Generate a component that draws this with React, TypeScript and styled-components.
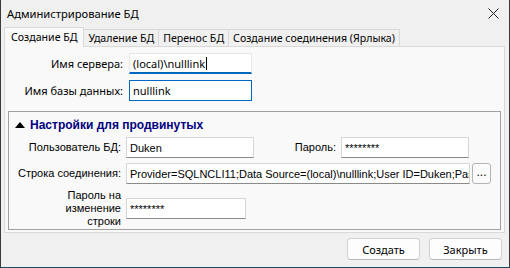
import styled, { createGlobalStyle } from 'styled-components';

const GlobalStyle = createGlobalStyle`
  html, body {
    margin: 0;
    padding: 0;
    background: #f0f0f0;
  }
  #root {
    width: 510px;
    height: 268px;
  }
`;

const uiFont = `'Noto Sans', 'Open Sans', sans-serif`;
const formFont = `'Liberation Sans', 'DejaVu Sans', sans-serif`;

const Window = styled.div`
  box-sizing: border-box;
  width: 510px;
  height: 268px;
  display: flex;
  flex-direction: column;
  background: #f0f0f0;
  border-left: 1px solid #3a3a3a;
  border-right: 1px solid #3a3a3a;
  border-bottom: 1px solid #1f4d5e;
  font-family: ${uiFont};
  font-size: 11px;
  color: #000;
`;

const TitleBar = styled.div`
  height: 27px;
  display: flex;
  align-items: center;
  justify-content: space-between;
  padding: 0 10px 0 6px;
  font-size: 11.2px;
`;

const CloseIcon = () => (
  <svg width="11" height="11" viewBox="0 0 11 11">
    <path d="M0.5 0.5 L10.5 10.5 M10.5 0.5 L0.5 10.5" stroke="#222" strokeWidth="1" />
  </svg>
);

const TabRow = styled.div`
  display: flex;
  align-items: flex-end;
  height: 20px;
  padding-left: 3px;
  position: relative;
  z-index: 1;
`;

const Tab = styled.div<{ $active?: boolean }>`
  box-sizing: border-box;
  height: ${(p) => (p.$active ? '20px' : '18px')};
  padding: 0 ${(p) => (p.$active ? '6px' : '4px')};
  display: flex;
  align-items: center;
  font-size: 10.6px;
  background: ${(p) => (p.$active ? '#f9f9f9' : '#f0f0f0')};
  border: 1px solid #d9d9d9;
  border-bottom: ${(p) => (p.$active ? '1px solid #f9f9f9' : '1px solid #d9d9d9')};
  margin-left: ${(p) => (p.$active ? '0' : '-1px')};
  white-space: nowrap;
`;

const Panel = styled.div`
  box-sizing: border-box;
  margin: -1px 4px 0 3px;
  height: 187px;
  background: #f9f9f9;
  border: 1px solid #d9d9d9;
  padding: 6px 3px 0 3px;
  display: flex;
  flex-direction: column;
`;

const TopRow = styled.div`
  display: flex;
  align-items: center;
  height: 21px;
  margin-bottom: 6px;
`;

const TopLabel = styled.div`
  width: 115px;
  padding-right: 6px;
  text-align: right;
`;

const TopInput = styled.div<{ $focused?: boolean }>`
  box-sizing: border-box;
  width: 123px;
  height: 21px;
  background: #fff;
  display: flex;
  align-items: center;
  padding-left: 3px;
  border: 1px solid ${(p) => (p.$focused ? '#e6e6e6' : '#0067c0')};
  border-bottom: ${(p) => (p.$focused ? '2px solid #0067c0' : '1px solid #0067c0')};
`;

const Caret = styled.span`
  display: inline-block;
  width: 1px;
  height: 13px;
  background: #000;
  margin-left: 1px;
`;

const GroupBox = styled.div`
  box-sizing: border-box;
  margin: 4px 0 0 0;
  height: 119px;
  border: 1px solid #a0a0a0;
  padding: 6px 0 0 6px;
  font-family: ${formFont};
  font-size: 11px;
`;

const GroupHeader = styled.div`
  display: flex;
  align-items: center;
  height: 14px;
  color: #000080;
  font-weight: bold;
  font-size: 12px;
  margin-bottom: 5px;
  gap: 5px;
`;

const Triangle = () => (
  <svg width="10" height="6" viewBox="0 0 10 6">
    <polygon points="0,6 10,6 5,0" fill="#000" />
  </svg>
);

const FormRow = styled.div`
  display: flex;
  align-items: center;
  margin-bottom: 5px;
`;

const FormLabel = styled.div<{ $width: number }>`
  width: ${(p) => p.$width}px;
  padding-right: 5px;
  text-align: right;
  line-height: 13px;
  white-space: nowrap;
`;

const FormInput = styled.div<{ $width: number }>`
  box-sizing: border-box;
  width: ${(p) => p.$width}px;
  height: 21px;
  background: #fff;
  border: 1px solid #d6d6d6;
  border-bottom: 1px solid #8a8a8a;
  display: flex;
  align-items: center;
  padding-left: 3px;
  overflow: hidden;
  white-space: nowrap;
`;

const EllipsisButton = styled.div`
  box-sizing: border-box;
  width: 19px;
  height: 21px;
  margin-left: 2px;
  border: 1px solid #b4b4b4;
  border-radius: 3px;
  background: #fbfbfb;
  display: flex;
  align-items: center;
  justify-content: center;
  padding-bottom: 3px;
  font-size: 12px;
`;

const Footer = styled.div`
  flex: 1;
  display: flex;
  justify-content: flex-end;
  align-items: center;
  gap: 9px;
  padding: 0 7px 2px 0;
`;

const Button = styled.button`
  box-sizing: border-box;
  width: 73px;
  height: 22px;
  background: #fdfdfd;
  border: 1px solid #d0d0d0;
  border-bottom-color: #b8b8b8;
  border-radius: 4px;
  font-family: ${uiFont};
  font-size: 11px;
  color: #000;
  padding: 0;
`;

const App = () => {
  const tabs = ['Создание БД', 'Удаление БД', 'Перенос БД', 'Создание соединения (Ярлыка)'];

  return (
    <>
      <GlobalStyle />
      <Window>
        <TitleBar>
          <span>Администрирование БД</span>
          <CloseIcon />
        </TitleBar>
        <TabRow>
          {tabs.map((t, i) => (
            <Tab key={t} $active={i === 0}>
              {t}
            </Tab>
          ))}
        </TabRow>
        <Panel>
          <TopRow>
            <TopLabel>Имя сервера:</TopLabel>
            <TopInput $focused>
              (local)\nulllink
              <Caret />
            </TopInput>
          </TopRow>
          <TopRow>
            <TopLabel>Имя базы данных:</TopLabel>
            <TopInput>nulllink</TopInput>
          </TopRow>
          <GroupBox>
            <GroupHeader>
              <Triangle />
              Настройки для продвинутых
            </GroupHeader>
            <FormRow>
              <FormLabel $width={106}>Пользователь БД:</FormLabel>
              <FormInput $width={128}>Duken</FormInput>
              <FormLabel $width={82}>Пароль:</FormLabel>
              <FormInput $width={128}>********</FormInput>
            </FormRow>
            <FormRow>
              <FormLabel $width={106}>Строка соединения:</FormLabel>
              <FormInput $width={344}>
                Provider=SQLNCLI11;Data Source=(local)\nulllink;User ID=Duken;Password=********
              </FormInput>
              <EllipsisButton>...</EllipsisButton>
            </FormRow>
            <FormRow>
              <FormLabel $width={106}>
                Пароль на
                <br />
                изменение
                <br />
                строки
              </FormLabel>
              <FormInput $width={120}>********</FormInput>
            </FormRow>
          </GroupBox>
        </Panel>
        <Footer>
          <Button>Создать</Button>
          <Button>Закрыть</Button>
        </Footer>
      </Window>
    </>
  );
};

export default App;
